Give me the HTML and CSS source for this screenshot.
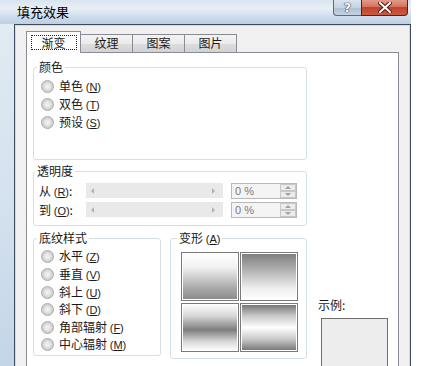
FILE: index.html
```html
<!DOCTYPE html>
<html lang="zh-CN">
<head>
    <meta charset="UTF-8">
    <title>填充效果</title>
    <link rel="stylesheet" href="styles.css">
</head>
<body>
    <div class="window">
        <!-- Заголовок окна -->
        <div class="titlebar">
            <span class="title">填充效果</span>
            <div class="caption-buttons">
                <span class="btn-help">?</span>
                <span class="btn-close">
                    <svg width="14" height="11" viewBox="0 0 14 11">
                        <path d="M2 1 L12 10 M12 1 L2 10" stroke="#5a1b14" stroke-width="4" stroke-linecap="square"/>
                        <path d="M2 1 L12 10 M12 1 L2 10" stroke="#ffffff" stroke-width="2" stroke-linecap="square"/>
                    </svg>
                </span>
            </div>
        </div>

        <div class="client">
            <!-- Вкладки -->
            <div class="tabs">
                <div class="tab active"><span class="focus">渐变</span></div>
                <div class="tab">纹理</div>
                <div class="tab">图案</div>
                <div class="tab">图片</div>
            </div>

            <div class="page">
                <fieldset class="group colors">
                    <legend>颜色</legend>
                    <div class="radio"><i class="dot"></i><span>单色 <span class="key">(<u>N</u>)</span></span></div>
                    <div class="radio"><i class="dot"></i><span>双色 <span class="key">(<u>T</u>)</span></span></div>
                    <div class="radio"><i class="dot"></i><span>预设 <span class="key">(<u>S</u>)</span></span></div>
                </fieldset>

                <fieldset class="group alpha">
                    <legend>透明度</legend>
                    <div class="alpha-row">
                        <span class="alpha-label">从 <span class="key">(<u>R</u>)</span>:</span>
                        <div class="scroll"><i class="arrow-l"></i><i class="arrow-r"></i></div>
                        <div class="spin">
                            <span class="spin-text">0 %</span>
                            <div class="spin-btns"><i class="up"></i><i class="down"></i></div>
                        </div>
                    </div>
                    <div class="alpha-row">
                        <span class="alpha-label">到 <span class="key">(<u>O</u>)</span>:</span>
                        <div class="scroll"><i class="arrow-l"></i><i class="arrow-r"></i></div>
                        <div class="spin">
                            <span class="spin-text">0 %</span>
                            <div class="spin-btns"><i class="up"></i><i class="down"></i></div>
                        </div>
                    </div>
                </fieldset>

                <div class="lower">
                    <fieldset class="group shading">
                        <legend>底纹样式</legend>
                        <div class="radio"><i class="dot"></i><span>水平 <span class="key">(<u>Z</u>)</span></span></div>
                        <div class="radio"><i class="dot"></i><span>垂直 <span class="key">(<u>V</u>)</span></span></div>
                        <div class="radio"><i class="dot"></i><span>斜上 <span class="key">(<u>U</u>)</span></span></div>
                        <div class="radio"><i class="dot"></i><span>斜下 <span class="key">(<u>D</u>)</span></span></div>
                        <div class="radio"><i class="dot"></i><span>角部辐射 <span class="key">(<u>F</u>)</span></span></div>
                        <div class="radio"><i class="dot"></i><span>中心辐射 <span class="key">(<u>M</u>)</span></span></div>
                    </fieldset>

                    <fieldset class="group variants">
                        <legend>变形 <span class="key">(<u>A</u>)</span></legend>
                        <div class="swatches">
                            <div class="swatch s1"></div>
                            <div class="swatch s2"></div>
                            <div class="swatch s3"></div>
                            <div class="swatch s4"></div>
                        </div>
                    </fieldset>

                    <div class="sample">
                        <div class="sample-label">示例:</div>
                        <div class="sample-box"></div>
                    </div>
                </div>

                <div class="check"><i class="box"></i><span>随图形旋转填充效果 <span class="key">(<u>W</u>)</span></span></div>
            </div>
        </div>
    </div>
</body>
</html>
```

FILE: styles.css
```css
/* Основные стили */
body {
    margin: 0;
    background: #ffffff;
    overflow: hidden;
    font-family: "Noto Sans CJK SC", "Noto Sans", sans-serif;
    font-size: 12px;
    color: #1a1a1a;
}

/* Окно */
.window {
    width: 411px;
    height: 366px;
    overflow: hidden;
    background: linear-gradient(to bottom, #e4ecf4 0%, #d3e0ee 60%, #c3d5e8 100%);
}

/* Заголовок */
.titlebar {
    height: 24px;
    display: flex;
    justify-content: space-between;
    align-items: flex-start;
    padding-left: 17px;
    padding-right: 3px;
    background: linear-gradient(to bottom, #d9e4ef 0%, #e8eff6 35%, #cddcec 70%, #bccfe4 100%);
}

.title {
    font-size: 13px;
    line-height: 13px;
    margin-top: 5px;
    color: #000000;
}

.caption-buttons {
    display: flex;
}

.btn-help,
.btn-close {
    height: 15px;
    display: flex;
    justify-content: center;
    align-items: center;
    border: 1px solid #5b6a7c;
    border-top: none;
}

.btn-help {
    width: 27px;
    border-right: none;
    border-bottom-left-radius: 4px;
    background: linear-gradient(to bottom, #dbe4ee 0%, #c5d3e2 50%, #aebfd3 51%, #c4d3e3 100%);
    color: #ffffff;
    font-family: "DejaVu Sans", sans-serif;
    font-weight: bold;
    font-size: 12px;
    line-height: 12px;
    text-shadow: 0 0 1px #2c3e55, 0 0 1px #2c3e55, 0 0 1px #2c3e55;
}

.btn-close {
    width: 45px;
    border-color: #5a2018;
    border-bottom-right-radius: 4px;
    background: linear-gradient(to bottom, #e49b8b 0%, #d4725f 45%, #c2432f 50%, #cf5a40 100%);
}

/* Клиентская область */
.client {
    margin-left: 14px;
    width: 397px;
    height: 342px;
    box-sizing: border-box;
    background: #f0f0f0;
    border: 1px solid #3e4c5d;
    border-bottom: none;
    box-shadow: inset 1px 1px 0 #cfdbe8, inset -1px 0 0 #cfdbe8;
    padding: 6px 0 0 11px;
}

/* Вкладки */
.tabs {
    display: flex;
    align-items: flex-end;
}

.tab {
    width: 53px;
    height: 18px;
    margin-left: -1px;
    box-sizing: border-box;
    border: 1px solid #898c95;
    border-bottom: none;
    background: linear-gradient(to bottom, #f3f3f3 0%, #ebebeb 50%, #dddddd 51%, #d2d2d2 100%);
    text-align: center;
    line-height: 16px;
    color: #1a1a1a;
}

.tab:first-child {
    margin-left: 0;
}

.tab.active {
    width: 55px;
    height: 22px;
    margin-bottom: -1px;
    background: #ffffff;
    position: relative;
    z-index: 1;
    padding-top: 3px;
    line-height: 14px;
}

.focus {
    display: inline-block;
    width: 46px;
    height: 15px;
    box-sizing: border-box;
    border: 1px dotted #222222;
    line-height: 13px;
}

/* Страница вкладки */
.page {
    width: 373px;
    height: 320px;
    box-sizing: border-box;
    background: #ffffff;
    border: 1px solid #898c95;
    border-bottom: none;
    padding: 8px 0 0 6px;
}

/* Групповые рамки */
.group {
    margin: 0;
    min-width: 0;
    border: 1px solid #d5dfe5;
    border-radius: 3px;
    box-sizing: border-box;
}

.group legend {
    font-size: 12px;
    line-height: 12px;
    padding: 0 2px;
    margin-left: -4px;
    color: #1a1a1a;
}

.colors {
    width: 274px;
    padding: 4px 0 27px 7px;
}

.alpha {
    width: 274px;
    margin-top: 5px;
    padding: 4px 0 6px 5px;
}

/* Радиокнопки */
.radio {
    height: 18.4px;
    display: flex;
    align-items: center;
    line-height: 14px;
    white-space: nowrap;
}

.shading .radio {
    height: 17.6px;
}

.dot {
    width: 11px;
    height: 11px;
    border-radius: 50%;
    border: 1px solid #a9a9a9;
    background: radial-gradient(circle at 50% 50%, #f4f4f4 0, #e6e6e6 35%, #cfcfcf 60%, #e8e8e8 100%);
    margin-right: 5px;
    flex: none;
}

.key {
    font-family: "Liberation Sans", sans-serif;
    font-size: 11px;
}

/* Прозрачность */
.alpha-row {
    height: 19px;
    display: flex;
    align-items: center;
}

.alpha-label {
    width: 47px;
    white-space: nowrap;
}

.scroll {
    width: 137px;
    height: 15px;
    background: #e9e9e9;
    display: flex;
    justify-content: space-between;
    align-items: center;
    padding: 0 8px 0 5px;
    box-sizing: border-box;
}

.arrow-l {
    border-right: 3px solid #b4b4b4;
    border-top: 3px solid transparent;
    border-bottom: 3px solid transparent;
}

.arrow-r {
    border-left: 3px solid #b4b4b4;
    border-top: 3px solid transparent;
    border-bottom: 3px solid transparent;
}

.spin {
    width: 66px;
    height: 16px;
    margin-left: 8px;
    box-sizing: border-box;
    border: 1px solid #b8b8b8;
    background: #f4f4f4;
    display: flex;
    justify-content: space-between;
}

.spin-text {
    font-family: "Liberation Sans", sans-serif;
    font-size: 11px;
    line-height: 14px;
    padding-left: 3px;
    color: #7a7a7a;
}

.spin-btns {
    width: 16px;
    display: flex;
    flex-direction: column;
}

.spin-btns i {
    flex: 1;
    border: 1px solid #c8c8c8;
    background: #ececec;
    display: flex;
    justify-content: center;
    align-items: center;
}

.spin-btns .up::after {
    content: "";
    border-bottom: 3px solid #a0a0a0;
    border-left: 3px solid transparent;
    border-right: 3px solid transparent;
}

.spin-btns .down::after {
    content: "";
    border-top: 3px solid #a0a0a0;
    border-left: 3px solid transparent;
    border-right: 3px solid transparent;
}

/* Нижний ряд */
.lower {
    display: flex;
    align-items: flex-start;
    margin-top: 6px;
}

.shading {
    width: 128px;
    padding: 4px 0 1px 7px;
}

.variants {
    width: 137px;
    margin-left: 9px;
    padding: 7px 0 6px 10px;
}

.swatches {
    display: grid;
    grid-template-columns: 58px 58px;
    grid-template-rows: 49px 49px;
    gap: 2px 1px;
}

.swatch {
    border: 1px solid #7a7a7a;
    box-shadow: inset 0 0 0 1px #ffffff;
}

.s1 {
    background: linear-gradient(to bottom, #ffffff 0%, #f2f2f2 30%, #a8a8a8 75%, #8a8a8a 100%);
}

.s2 {
    background: linear-gradient(to bottom, #7c7c7c 0%, #a8a8a8 30%, #eeeeee 75%, #ffffff 100%);
}

.s3 {
    background: linear-gradient(to bottom, #ffffff 0%, #d8d8d8 25%, #7e7e7e 55%, #d8d8d8 80%, #ffffff 100%);
}

.s4 {
    background: linear-gradient(to bottom, #707070 0%, #c8c8c8 25%, #ffffff 50%, #c8c8c8 75%, #727272 100%);
}

/* Пример */
.sample {
    margin-left: 11px;
    padding-top: 66px;
}

.sample-label {
    line-height: 14px;
}

.sample-box {
    width: 67px;
    height: 60px;
    margin: 6px 0 0 3px;
    box-sizing: border-box;
    border: 1px solid #6e6e6e;
    border-bottom: none;
    background: #ededed;
}

/* Флажок */
.check {
    display: flex;
    align-items: flex-start;
    margin-top: 4px;
    line-height: 14px;
    white-space: nowrap;
}

.box {
    width: 11px;
    height: 11px;
    border: 1px solid #8f8f8f;
    background: #f4f4f4;
    margin-right: 5px;
    margin-top: 1px;
}
```
